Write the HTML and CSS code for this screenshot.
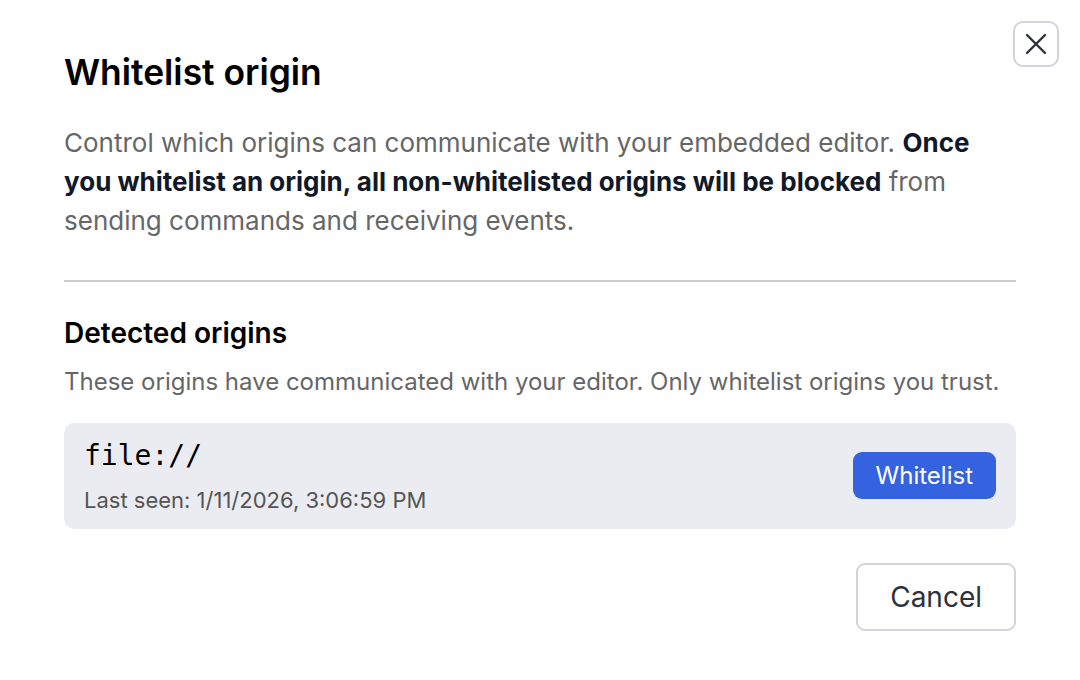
FILE: index.html
```html
<!DOCTYPE html>
<html lang="en">
<head>
    <meta charset="utf-8">
    <link rel="stylesheet" href="styles.css">
</head>
<body>
    <div class="dialog">
        <button class="close-button" aria-label="Close">
            <svg width="22" height="22" viewBox="0 0 22 22" fill="none" stroke="currentColor" stroke-width="2.4" stroke-linecap="round">
                <path d="M2 2L20 20M20 2L2 20"/>
            </svg>
        </button>

        <h2 class="dialog-title">Whitelist origin</h2>
        <p class="dialog-intro">
            Control which origins can communicate with your embedded editor.
            <strong>Once you whitelist an origin, all non-whitelisted origins will be blocked</strong>
            from sending commands and receiving events.
        </p>

        <hr class="divider">

        <h3 class="section-title">Detected origins</h3>
        <p class="section-hint">These origins have communicated with your editor. Only whitelist origins you trust.</p>

        <div class="origin-list">
            <div class="origin-row">
                <div class="origin-info">
                    <div class="origin-url">file://</div>
                    <div class="origin-seen">Last seen: 1/11/2026, 3:06:59 PM</div>
                </div>
                <button class="button primary">Whitelist</button>
            </div>
        </div>

        <div class="dialog-actions">
            <button class="button outline">Cancel</button>
        </div>
    </div>
</body>
</html>
```

FILE: styles.css
```css
body {
    margin: 0;
    background-color: #ffffff;
    font-family: "Inter", "Noto Sans", sans-serif;
    color: #000000;
}

.dialog {
    position: relative;
    padding: 50px 64px 40px 64px;
}

.close-button {
    position: absolute;
    top: 21px;
    right: 21px;
    width: 46px;
    height: 46px;
    display: flex;
    align-items: center;
    justify-content: center;
    padding: 0;
    background-color: #ffffff;
    border: 2px solid #d1d5db;
    border-radius: 10px;
    color: #2d3139;
    cursor: pointer;
}

.dialog-title {
    margin: 0;
    font-size: 35.4px;
    line-height: 46px;
    font-weight: 600;
    color: #000000;
}

.dialog-intro {
    margin: 27px 0 0 0;
    font-size: 26px;
    line-height: 39px;
    color: #666666;
}

.dialog-intro strong {
    font-weight: 700;
    color: #111827;
}

.divider {
    margin: 40px 0 0 0;
    border: none;
    border-top: 2px solid #cccccc;
}

.section-title {
    margin: 33px 0 0 0;
    font-size: 28px;
    line-height: 36px;
    font-weight: 600;
}

.section-hint {
    margin: 15px 0 0 0;
    font-size: 24px;
    line-height: 32px;
    color: #666666;
}

.origin-list {
    margin-top: 25px;
}

.origin-row {
    display: flex;
    align-items: center;
    justify-content: space-between;
    padding: 14px 20px 15px 20px;
    background-color: #ebecf1;
    border-radius: 10px;
}

.origin-url {
    font-family: "DejaVu Sans Mono", monospace;
    font-size: 28px;
    line-height: 38px;
    color: #000000;
}

.origin-seen {
    margin-top: 11px;
    font-size: 22px;
    line-height: 28px;
    color: #555555;
}

.button {
    font-family: inherit;
    cursor: pointer;
    border-radius: 9px;
}

.button.primary {
    padding: 0 23px;
    height: 47px;
    border: none;
    background-color: #3563e0;
    color: #ffffff;
    font-size: 24px;
}

.button.outline {
    padding: 0 32px;
    height: 68px;
    border: 2px solid #d1d5db;
    background-color: #ffffff;
    color: #2d3139;
    font-size: 28px;
}

.dialog-actions {
    display: flex;
    justify-content: flex-end;
    margin-top: 34px;
}
```
